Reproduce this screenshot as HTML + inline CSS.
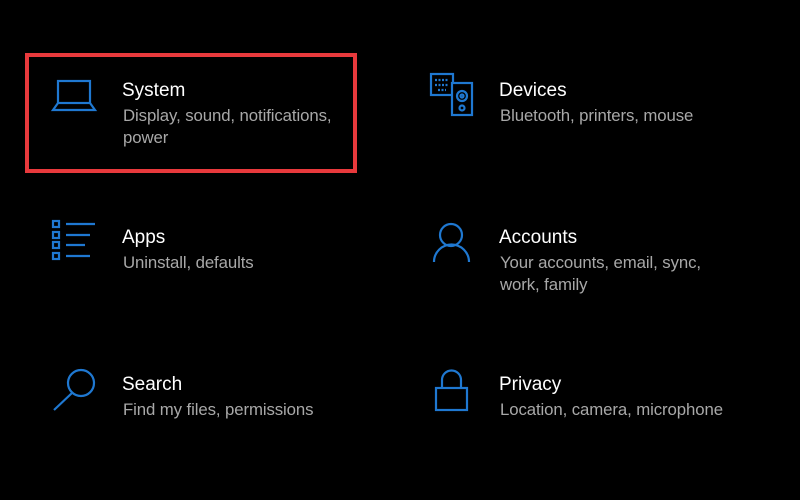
<!DOCTYPE html>
<html><head><style>
body{margin:0;width:800px;height:500px;background:#000;overflow:hidden;position:relative;font-family:"Liberation Sans",sans-serif}
.t{position:absolute;color:#fff;font-size:19px}
.s{position:absolute;color:#a8a8a8;font-size:16.8px;line-height:22px;letter-spacing:-0.1px}
svg{position:absolute;left:0;top:0}
</style></head><body>
<div style="position:absolute;left:25px;top:53px;width:324px;height:112px;border:4px solid #e8393c"></div>
<svg width="800" height="500" fill="none" stroke="#1f78d1" stroke-width="2.2">
<rect x="58" y="81" width="32" height="22"/>
<path d="M58 103 L53 110 L95 110 L90 103"/>
<rect x="431" y="74" width="22" height="21"/>
<path d="M435 80h14M435 85h14M438 90h8" stroke-dasharray="2 1.5"/>
<rect x="452" y="83" width="20" height="32" fill="#000"/>
<circle cx="462" cy="96" r="5"/><circle cx="462" cy="96" r="1.5"/><circle cx="462" cy="108" r="2.5"/>
<rect x="53" y="221" width="6" height="6"/><rect x="53" y="232" width="6" height="6"/><rect x="53" y="242" width="6" height="6"/><rect x="53" y="253" width="6" height="6"/>
<path d="M66 224h29M66 235h24M66 245h19M66 256h24"/>
<circle cx="81" cy="383" r="13"/><path d="M72 393L54 410"/>
<circle cx="451" cy="235" r="11"/><path d="M434 262a17 17 0 0 1 35 0"/>
<rect x="436" y="388" width="31" height="22"/><path d="M442 388v-8a9.5 9.5 0 0 1 19 0v8"/>
</svg>
<div class="t" style="left:122px;top:80px">System</div>
<div class="s" style="left:123px;top:105px">Display, sound, notifications,<br>power</div>
<div class="t" style="left:499px;top:80px">Devices</div>
<div class="s" style="left:500px;top:105px">Bluetooth, printers, mouse</div>
<div class="t" style="left:122px;top:227px">Apps</div>
<div class="s" style="left:123px;top:252px">Uninstall, defaults</div>
<div class="t" style="left:499px;top:227px">Accounts</div>
<div class="s" style="left:500px;top:252px">Your accounts, email, sync,<br>work, family</div>
<div class="t" style="left:122px;top:374px">Search</div>
<div class="s" style="left:123px;top:399px">Find my files, permissions</div>
<div class="t" style="left:499px;top:374px">Privacy</div>
<div class="s" style="left:500px;top:399px">Location, camera, microphone</div>
</body></html>
